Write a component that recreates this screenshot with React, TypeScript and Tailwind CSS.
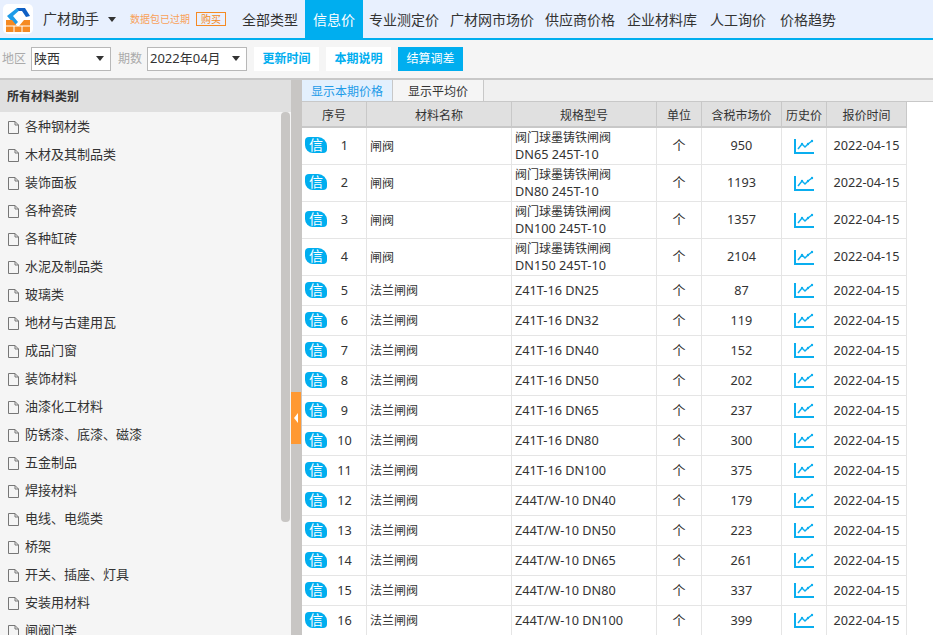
import React from 'react';

const navItems = [
  { label: '专业测定价', cls: '' },
  { label: '广材网市场价', cls: 'ml-[11px]' },
  { label: '供应商价格', cls: 'ml-[11px]' },
  { label: '企业材料库', cls: 'ml-[12px]' },
  { label: '人工询价', cls: 'ml-[13px]' },
  { label: '价格趋势', cls: 'ml-[14px]' },
];

const categories = [
  '各种钢材类', '木材及其制品类', '装饰面板', '各种瓷砖', '各种缸砖', '水泥及制品类', '玻璃类',
  '地材与古建用瓦', '成品门窗', '装饰材料', '油漆化工材料', '防锈漆、底漆、磁漆', '五金制品',
  '焊接材料', '电线、电缆类', '桥架', '开关、插座、灯具', '安装用材料', '闸阀门类',
];

const columns = ['序号', '材料名称', '规格型号', '单位', '含税市场价', '历史价', '报价时间'];

const rows = [
  { name: '闸阀', spec: ['阀门球墨铸铁闸阀', 'DN65 245T-10'], price: 950 },
  { name: '闸阀', spec: ['阀门球墨铸铁闸阀', 'DN80 245T-10'], price: 1193 },
  { name: '闸阀', spec: ['阀门球墨铸铁闸阀', 'DN100 245T-10'], price: 1357 },
  { name: '闸阀', spec: ['阀门球墨铸铁闸阀', 'DN150 245T-10'], price: 2104 },
  { name: '法兰闸阀', spec: ['Z41T-16 DN25'], price: 87 },
  { name: '法兰闸阀', spec: ['Z41T-16 DN32'], price: 119 },
  { name: '法兰闸阀', spec: ['Z41T-16 DN40'], price: 152 },
  { name: '法兰闸阀', spec: ['Z41T-16 DN50'], price: 202 },
  { name: '法兰闸阀', spec: ['Z41T-16 DN65'], price: 237 },
  { name: '法兰闸阀', spec: ['Z41T-16 DN80'], price: 300 },
  { name: '法兰闸阀', spec: ['Z41T-16 DN100'], price: 375 },
  { name: '法兰闸阀', spec: ['Z44T/W-10 DN40'], price: 179 },
  { name: '法兰闸阀', spec: ['Z44T/W-10 DN50'], price: 223 },
  { name: '法兰闸阀', spec: ['Z44T/W-10 DN65'], price: 261 },
  { name: '法兰闸阀', spec: ['Z44T/W-10 DN80'], price: 337 },
  { name: '法兰闸阀', spec: ['Z44T/W-10 DN100'], price: 399 },
];

const Logo = () => (
  <div className="w-[30px] h-[30px] rounded-[5px] bg-white shrink-0">
    <svg width="30" height="30" viewBox="0 0 30 30">
      <path d="M4 12 L14 4 H19 L10 12 L15 18 L12 21 Z" fill="#1e9be8" />
      <path d="M14 4 H22 L27 12 L23 13 L19 7 H16 Z" fill="#0f5fc4" />
      <path d="M3 16 H9 L14 22 H16 L21 16 H27 V28 H3 Z" fill="#f58a23" />
      <path d="M3 22 H27 M11 22 V28 M19 22 V28" stroke="#fff" strokeWidth="1" fill="none" />
    </svg>
  </div>
);

const Caret = () => <span className="w-0 h-0 border-x-[4px] border-x-transparent border-t-[5px] border-t-[#333]" />;

const FileIcon = () => (
  <svg width="11" height="13" viewBox="0 0 11 13" className="shrink-0">
    <path d="M0.5 0.5 H7 L10.5 4 V12.5 H0.5 Z M7 0.5 V4 H10.5" fill="none" stroke="#777" strokeWidth="1" />
  </svg>
);

const TrendIcon = () => (
  <svg width="20" height="15" viewBox="0 0 20 15">
    <path d="M1 0 V14 H20" fill="none" stroke="#0aaeef" strokeWidth="2" />
    <path d="M4 10 L8 5 L11 8 L14 5 L18 2" fill="none" stroke="#0aaeef" strokeWidth="1.5" />
    <circle cx="8" cy="5" r="1.2" fill="#0aaeef" />
    <circle cx="14" cy="5" r="1.2" fill="#0aaeef" />
    <circle cx="18" cy="2" r="1.2" fill="#0aaeef" />
  </svg>
);

const Select = ({ value, className }: { value: string; className: string }) => (
  <div className={`h-[24px] bg-white border border-[#b8b8b8] flex items-center justify-between pl-[2px] pr-[6px] text-[13px] text-[#333] ${className}`}>
    <span>{value}</span>
    <Caret />
  </div>
);

export default function App() {
  return (
    <div className="w-[933px] h-[635px] overflow-hidden flex flex-col bg-white text-[#333] font-['Noto_Sans','Noto_Sans_CJK_SC',sans-serif]">
      <header className="h-[40px] shrink-0 bg-[#e8f0fe] border-b-2 border-[#00aeef] flex items-stretch pl-[3px]">
        <div className="flex items-center">
          <Logo />
        </div>
        <span className="ml-[10px] self-center text-[14px] leading-none">广材助手</span>
        <span className="ml-[9px] self-center flex"><Caret /></span>
        <span className="ml-[14px] self-center text-[10px] leading-none text-[#f9a15a]">数据包已过期</span>
        <span className="ml-[6px] self-center w-[30px] h-[14px] border border-[#f58a23] text-[10px] leading-[12px] text-center text-[#f58a23]">购买</span>
        <span className="ml-[16px] self-center pt-[1px] text-[14px] leading-none">全部类型</span>
        <span className="ml-[7px] w-[58px] pt-[1px] bg-[#00aeef] text-white text-[14px] flex items-center justify-center">信息价</span>
        <nav className="ml-[6px] pt-[1px] flex items-center text-[14px] leading-none">
          {navItems.map((item) => (
            <span key={item.label} className={item.cls}>{item.label}</span>
          ))}
        </nav>
      </header>

      <div className="h-[40px] shrink-0 bg-[#f5f5f5] border-b-2 border-[#c8c8c8] flex items-center pl-[2px] pb-[1px] text-[12px]">
        <span className="w-[29px] text-[#aaa]">地区</span>
        <Select value="陕西" className="w-[80px]" />
        <span className="ml-[7px] w-[29px] text-[#aaa]">期数</span>
        <Select value="2022年04月" className="w-[100px]" />
        <button className="ml-[7px] w-[65px] h-[24px] bg-white text-[#00aeef] font-semibold">更新时间</button>
        <button className="ml-[7px] w-[65px] h-[24px] bg-white text-[#00aeef] font-semibold">本期说明</button>
        <button className="ml-[7px] w-[65px] h-[24px] bg-[#00aeef] text-white">结算调差</button>
      </div>

      <div className="flex-1 min-h-0 flex">
        <aside className="w-[291px] shrink-0 flex bg-[#f5f5f5]">
          <div className="w-[281px] shrink-0">
            <div className="h-[32px] bg-[#e0e0e0] -mr-[10px] pl-[7px] pt-[1px] flex items-center text-[12px] font-bold">所有材料类别</div>
            <ul className="pt-[1px]">
              {categories.map((c) => (
                <li key={c} className="h-[28px] pl-[8px] flex items-center gap-[6px] text-[13px]">
                  <FileIcon />
                  <span>{c}</span>
                </li>
              ))}
            </ul>
          </div>
          <div className="w-[10px] pt-[32px]">
            <div className="w-[9px] h-[410px] bg-[#c8c6c4] rounded-[4px]" />
          </div>
        </aside>

        <div className="w-[11px] shrink-0 bg-[#c8c6c4] pt-[312px]">
          <div className="w-[10px] h-[52px] bg-[#ff9933] flex items-center justify-center">
            <span className="w-0 h-0 border-y-[5px] border-y-transparent border-r-[4px] border-r-white" />
          </div>
        </div>

        <main className="flex-1 min-w-0">
          <div className="h-[22px] bg-[#f0f0f0] border-b border-[#c8c8c8] flex text-[12px]">
            <div className="w-[91px] pt-[2px] bg-[#e3f0fd] text-[#1e9be8] border-r border-[#c8c8c8] flex items-center justify-center">显示本期价格</div>
            <div className="w-[91px] pt-[2px] bg-[#f5f5f5] border-r border-[#c8c8c8] flex items-center justify-center">显示平均价</div>
          </div>

          <div className="w-[605px] h-[26px] bg-[#e0e0e0] border-b-2 border-[#c8c8c8] grid grid-cols-[65px_145px_145px_45px_80px_45px_80px] text-[12px]">
            {columns.map((c) => (
              <div key={c} className="pt-[3px] border-r border-[#c8c8c8] flex items-center justify-center">{c}</div>
            ))}
          </div>

          {rows.map((r, i) => {
            const tall = r.spec.length > 1;
            return (
              <div
                key={i}
                className={`w-[605px] grid grid-cols-[65px_145px_145px_45px_80px_45px_80px] border-b border-[#e5e5e5] text-[12px] ${tall ? 'h-[37px]' : 'h-[30px]'}`}
              >
                <div className="border-r border-[#e5e5e5] flex items-center pl-[3px]">
                  <span className="w-[22px] h-[16px] mb-[2px] bg-[#00aeef] text-white text-[14px] leading-none rounded-[4px_9px_4px_8px] flex items-center justify-center">信</span>
                  <span className="flex-1 text-center pr-[4px] text-[12.7px]">{i + 1}</span>
                </div>
                <div className={`border-r border-[#e5e5e5] flex items-center pl-[3px] ${tall ? 'pt-[1px]' : ''}`}>{r.name}</div>
                <div className={`border-r border-[#e5e5e5] flex flex-col justify-center pl-[3px] ${tall ? 'leading-[17px]' : 'text-[12.7px]'}`}>
                  {r.spec.map((s, k) => (
                    <span key={s} className={tall && k === 1 ? 'text-[12.7px]' : ''}>{s}</span>
                  ))}
                </div>
                <div className="border-r border-[#e5e5e5] flex items-center justify-center text-[13px]">个</div>
                <div className="border-r border-[#e5e5e5] flex items-center justify-center text-[12.7px]">{r.price}</div>
                <div className="border-r border-[#e5e5e5] flex items-center justify-center"><TrendIcon /></div>
                <div className="border-r border-[#e5e5e5] flex items-center justify-center text-[12.7px]">2022-04-15</div>
              </div>
            );
          })}
        </main>
      </div>
    </div>
  );
}
